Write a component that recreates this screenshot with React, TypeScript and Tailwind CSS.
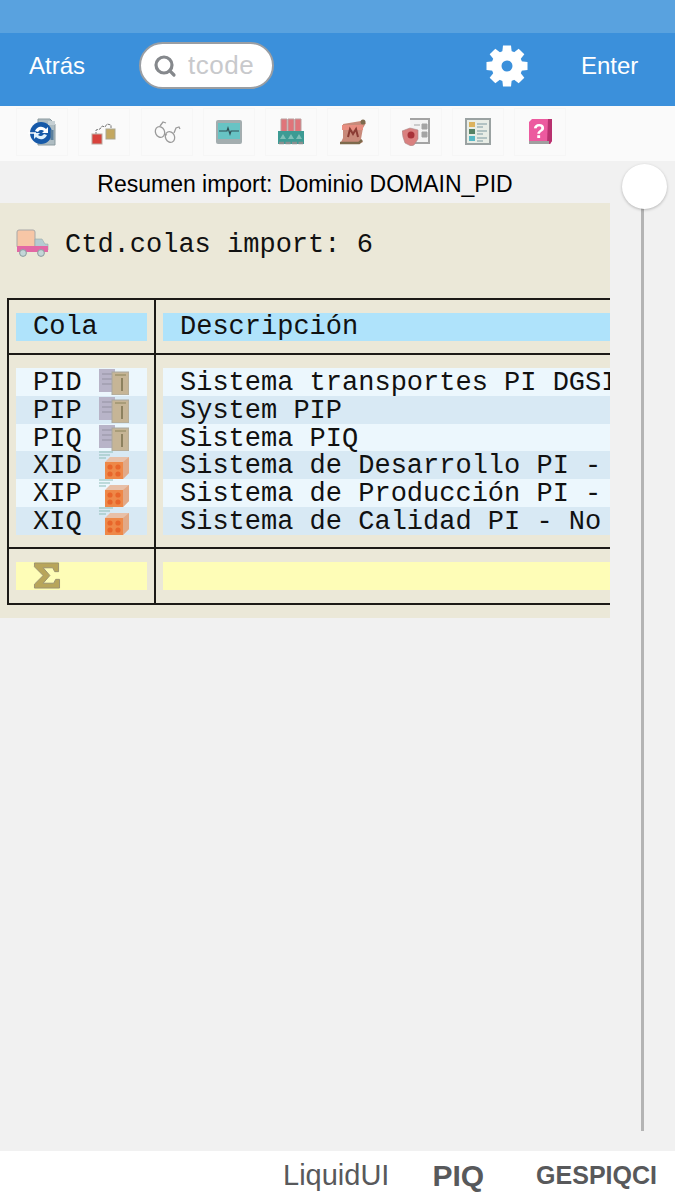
import { Search } from "lucide-react";
import type { ReactNode } from "react";

const sans = "font-['Liberation_Sans',Arial,sans-serif]";

function Glyph({ children, className = "" }: { children: ReactNode; className?: string }) {
  return (
    <svg viewBox="0 0 28 28" className={`h-7 w-7 shrink-0 blur-[0.5px] ${className}`}>
      {children}
    </svg>
  );
}

function Gear() {
  const angles = [0, 45, 90, 135, 180, 225, 270, 315];
  return (
    <svg viewBox="0 0 42 42" className="h-[42px] w-[42px]">
      <circle cx="21" cy="21" r="10.5" fill="none" stroke="#fff" strokeWidth="10" />
      {angles.map((a) => (
        <path key={a} d="M17 0.5h8l1 9h-10z" fill="#fff" transform={`rotate(${a} 21 21)`} />
      ))}
    </svg>
  );
}

const toolbarIcons: ReactNode[] = [
  <Glyph key="refresh">
    <path d="M10 1h12l5 5v21H10z" fill="#aebcc2" stroke="#8b9a9f" />
    <circle cx="13" cy="15" r="11" fill="#1659a8" />
    <path d="M20 3h7v4h-7z" fill="#c6d0d4" />
    <path d="M7 13a6.5 6.5 0 0 1 11-2l2-2v6h-6l2-2a4 4 0 0 0-6 1z" fill="#fff" />
    <path d="M19 17a6.5 6.5 0 0 1-11 2l-2 2v-6h6l-2 2a4 4 0 0 0 6-1z" fill="#dff0fb" />
    <path d="M0 15h8" stroke="#fff" strokeWidth="1.5" />
    <path d="M24 12v10" stroke="#5b7f9c" strokeWidth="3" />
  </Glyph>,
  <Glyph key="flow">
    <path d="M6 17v-5l4-1 2-3 3 1 2-3 4 1v3" fill="none" stroke="#777" strokeWidth="1" strokeDasharray="3 1" />
    <rect x="2" y="16" width="10" height="10" fill="#d8423c" stroke="#b9a9a0" />
    <rect x="16" y="11" width="9" height="10" fill="#c4a860" stroke="#a9a58f" />
  </Glyph>,
  <Glyph key="glasses">
    <g fill="none" stroke="#9a9a9a" strokeWidth="1.3">
      <ellipse cx="7" cy="14" rx="4.5" ry="5.5" transform="rotate(-25 7 14)" />
      <ellipse cx="17" cy="19" rx="4.5" ry="5.5" transform="rotate(-25 17 19)" />
      <path d="M11 16l3 1M7 8l3-4 3 1M21 15l2-5 3-1 1 2" />
    </g>
  </Glyph>,
  <Glyph key="monitor">
    <rect x="1" y="2" width="26" height="24" rx="2" fill="#a3adaf" />
    <rect x="3" y="5" width="22" height="16" fill="#67c3c4" />
    <path d="M4 13h8l1-3 2 6 1-3h8" fill="none" stroke="#2f4f55" strokeWidth="1.2" />
  </Glyph>,
  <Glyph key="stacks">
    <path d="M4 1h6v13H4zM11 1h6v13h-6zM18 1h6v13h-6z" fill="#e0747a" stroke="#b9a0a0" />
    <path d="M1 13h26v13H1z" fill="#3d9b94" />
    <path d="M3 21l3-5 3 5zM11 21l3-5 3 5zM19 21l3-5 3 5z" fill="#7fc0b8" />
    <path d="M2 25h24" stroke="#8a8f8f" strokeWidth="2.5" strokeDasharray="5 1.5" />
  </Glyph>,
  <Glyph key="scroll">
    <path d="M4 6l18-3 5 2-3 5-2 11 2 3-4 2H1l3-6z" fill="#c88a7a" />
    <path d="M3 7h21v5H3z" fill="#e88d80" />
    <path d="M9 19l2-8 3 5 3-5 2 8" fill="none" stroke="#8a3c34" strokeWidth="2" />
    <path d="M1 25h19l3-3" fill="none" stroke="#7d6a4c" strokeWidth="2.5" />
    <circle cx="24" cy="4" r="2.5" fill="#7d6a4c" />
  </Glyph>,
  <Glyph key="shield">
    <path d="M8 1h19v24H10" fill="#f3f3f3" stroke="#a3a3a3" strokeWidth="2" />
    <path d="M12 7h6M20 6h5v5h-5zM20 14h5v5h-5z" fill="#a4a4a4" stroke="#a4a4a4" />
    <path d="M0 13l8-3 8 2v9l-4 6-3 1-6-3-2-6z" fill="#d9807f" stroke="#aa8888" strokeWidth="0.6" />
    <circle cx="9" cy="17" r="3.5" fill="#a83238" />
  </Glyph>,
  <Glyph key="list">
    <rect x="2" y="1" width="24" height="25" fill="#e8ede6" stroke="#9aa2a2" strokeWidth="2" />
    <rect x="5" y="4" width="6" height="5" fill="#dcb35e" />
    <rect x="5" y="11" width="6" height="5" fill="#568265" />
    <rect x="5" y="18" width="6" height="5" fill="#58b9c6" />
    <path d="M13 6h10M13 9h6M13 13h10M13 16h6M13 20h10M13 23h6" stroke="#7d9aa0" strokeWidth="1.2" />
  </Glyph>,
  <Glyph key="help">
    <path d="M3 4l3-3h20v22l-2 3H3z" fill="#ec5a9f" />
    <path d="M22 1h4v22l-2 3h-3z" fill="#b8316f" />
    <path d="M3 23h20v3H3z" fill="#9f9f9f" />
    <text x="13" y="20" textAnchor="middle" fontSize="20" fontWeight="700" fill="#fff" fontFamily="Liberation Sans">?</text>
  </Glyph>,
];

function ServerIcon() {
  return (
    <svg viewBox="0 0 30 26" className="h-[26px] w-[30px] blur-[0.6px]">
      <rect x="0" y="0" width="16" height="23" fill="#b8b4c8" />
      <path d="M3 5h10M3 10h10M3 15h10" stroke="#a09daf" strokeWidth="1.5" />
      <rect x="13" y="3" width="17" height="23" fill="#c6b596" stroke="#a8a8a0" />
      <path d="M16 6h11" stroke="#a89c78" strokeWidth="2" />
      <path d="M23 9v13" stroke="#8c815f" strokeWidth="2" fill="none" />
    </svg>
  );
}

function CubeIcon() {
  return (
    <svg viewBox="0 0 30 28" className="h-7 w-[30px] blur-[0.5px]">
      <path d="M0 1h14M0 4h11M0 7h7" stroke="#8dbdb7" strokeWidth="1" />
      <path d="M6 11l5-5h19v16l-6 6H6z" fill="#e8c0a8" />
      <path d="M24 11l6-5v16l-6 6z" fill="#e2a987" />
      <rect x="6" y="11" width="18" height="17" fill="#ee8848" />
      <circle cx="11" cy="16" r="2.6" fill="#e8652a" />
      <circle cx="19" cy="16" r="2.6" fill="#e8652a" />
      <circle cx="11" cy="23" r="2.6" fill="#e8652a" />
      <circle cx="19" cy="23" r="2.6" fill="#e8652a" />
    </svg>
  );
}

function TruckIcon() {
  return (
    <svg viewBox="0 0 33 28" className="h-7 w-[33px] blur-[0.5px]">
      <rect x="1" y="1" width="18" height="18" rx="2" fill="#f7c6a6" stroke="#a8a8a8" />
      <path d="M19 10h7l3 5h3v6H19z" fill="#b5cbd2" stroke="#99aaaa" strokeWidth="0.6" />
      <path d="M1 17h31v6H1z" fill="#e268a5" />
      <circle cx="7" cy="24" r="3.4" fill="#c3d6d8" stroke="#8b9a9c" />
      <circle cx="25" cy="24" r="3.4" fill="#c3d6d8" stroke="#8b9a9c" />
    </svg>
  );
}

const rows = [
  { cola: "PID", icon: "server", text: "Sistema transportes PI DGSI" },
  { cola: "PIP", icon: "server", text: "System PIP" },
  { cola: "PIQ", icon: "server", text: "Sistema PIQ" },
  { cola: "XID", icon: "cube", text: "Sistema de Desarrollo PI -" },
  { cola: "XIP", icon: "cube", text: "Sistema de Producción PI -" },
  { cola: "XIQ", icon: "cube", text: "Sistema de Calidad PI - No" },
];

export default function App() {
  return (
    <div className={`flex h-[1200px] w-[675px] flex-col overflow-hidden bg-[#f1f1f1] ${sans}`}>
      <div className="h-[33px] bg-[#59a2df]" />

      <header className="flex h-[73px] items-center bg-[#3b90db] pb-[8px] text-white">
        <span className="ml-[29px] w-[110px] text-[24px]">Atrás</span>
        <div className="flex h-[47px] w-[135px] items-center rounded-full border-2 border-[#9a9ea3] bg-white pl-[12px]">
          <Search size={24} strokeWidth={3.2} className="text-[#85888c]" />
          <span className="ml-[11px] text-[26px] tracking-[0.5px] text-[#c8c9cc]">tcode</span>
        </div>
        <div className="ml-[212px]">
          <Gear />
        </div>
        <span className="ml-[53px] text-[24px]">Enter</span>
      </header>

      <div className="flex h-[55px] gap-[10.25px] bg-[#fafafa] pl-[16px] pt-[2px]">
        {toolbarIcons.map((icon, i) => (
          <div key={i} className="flex h-[48px] w-[52px] items-center justify-center border border-[#f6f6f6]">
            {icon}
          </div>
        ))}
      </div>

      <div className="relative flex-1">
        <div className="w-[610px]">
          <div className="flex h-[42px] items-center justify-center pt-[4px] text-[23px] text-black">
            Resumen import: Dominio DOMAIN_PID
          </div>

          <div className="overflow-hidden whitespace-nowrap bg-[#ebe8d8] pb-[13px] font-['Liberation_Mono','Courier_New',monospace] text-[27px] leading-[28px] text-[#111]">
            <div className="mb-[15px] flex h-[80px] items-center pl-[16px]">
              <TruckIcon />
              <span className="ml-[16px] pt-[3px]">Ctd.colas import: 6</span>
            </div>

            <div className="ml-[7px] border-y-2 border-l-2 border-[#1c1a16]">
              <div className="flex border-b-2 border-[#1c1a16]">
                <div className="w-[147px] shrink-0 border-r-2 border-[#1c1a16] px-[7px] pb-[12px] pt-[13px]">
                  <div className="h-[28px] bg-[#afe3fb] pl-[17px]">Cola</div>
                </div>
                <div className="flex-1 pb-[12px] pl-[7px] pt-[13px]">
                  <div className="h-[28px] bg-[#afe3fb] pl-[17px]">Descripción</div>
                </div>
              </div>

              <div className="flex border-b-2 border-[#1c1a16]">
                <div className="w-[147px] shrink-0 border-r-2 border-[#1c1a16] px-[7px] pb-[12px] pt-[13px]">
                  {rows.map((r, i) => (
                    <div
                      key={r.cola}
                      className={`flex h-[27.83px] items-center justify-between pl-[17px] pr-[18px] ${i % 2 ? "bg-[#d8e9f4]" : "bg-[#ecf7fd]"}`}
                    >
                      <span className="pt-[2px]">{r.cola}</span>
                      {r.icon === "server" ? <ServerIcon /> : <CubeIcon />}
                    </div>
                  ))}
                </div>
                <div className="min-w-0 flex-1 pb-[12px] pl-[7px] pt-[13px]">
                  {rows.map((r, i) => (
                    <div
                      key={r.cola}
                      className={`flex h-[27.83px] items-center pl-[17px] pt-[2px] ${i % 2 ? "bg-[#d8e9f4]" : "bg-[#ecf7fd]"}`}
                    >
                      {r.text}
                    </div>
                  ))}
                </div>
              </div>

              <div className="flex">
                <div className="w-[147px] shrink-0 border-r-2 border-[#1c1a16] px-[7px] py-[13px]">
                  <div className="flex h-[28px] items-center bg-[#fefdb7] pl-[17px]">
                    <svg viewBox="0 0 28 28" className="h-[27px] w-[28px] blur-[0.3px]">
                      <path
                        d="M1 1h25v9h-4l-2-4H10l7 8-7 8h11l2-4h4v9H1v-4l9-9-9-9z"
                        fill="#b8a55a"
                        stroke="#9a9170"
                      />
                    </svg>
                  </div>
                </div>
                <div className="flex-1 py-[13px] pl-[7px]">
                  <div className="h-[28px] bg-[#fefdb7]" />
                </div>
              </div>
            </div>
          </div>
        </div>

        {/* scroll slider lies over the page background */}
        <div className="absolute left-[641px] top-[25px] h-[945px] w-[3px] bg-[#b4b4b4]" />
        <div className="absolute left-[622px] top-[3px] h-[45px] w-[45px] rounded-full bg-white shadow-[0_1px_3px_rgba(0,0,0,0.25)]" />
      </div>

      <footer className="flex h-[49px] items-center bg-white text-[#58595b]">
        <span className="ml-[283px] text-[29px]">LiquidUI</span>
        <span className="ml-[43px] text-[30px] font-bold">PIQ</span>
        <span className="ml-[52px] text-[25px] font-bold">GESPIQCI</span>
      </footer>
    </div>
  );
}
